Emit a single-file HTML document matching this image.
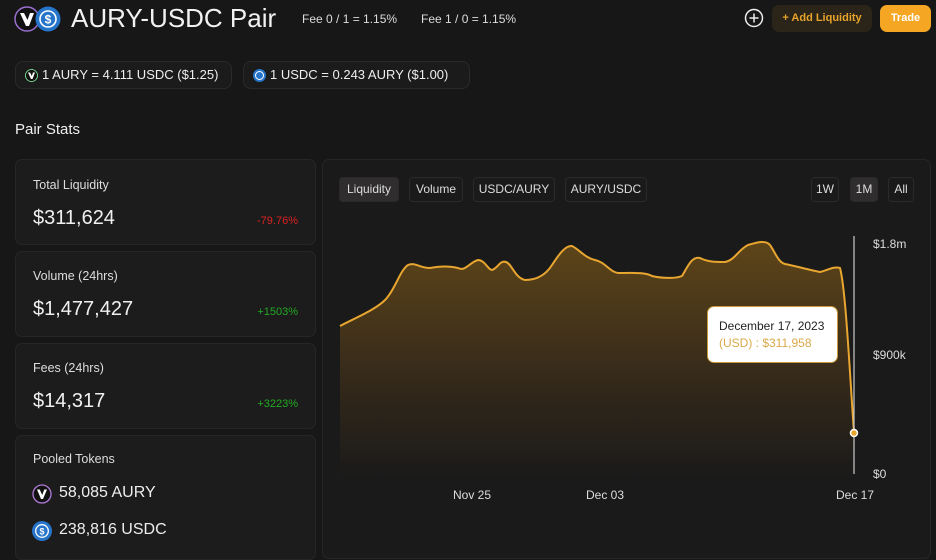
<!DOCTYPE html>
<html><head><meta charset="utf-8"><style>
*{margin:0;padding:0;box-sizing:border-box}
body{width:936px;height:548px;background:#171717;font-family:"Liberation Sans",sans-serif;color:#eee;position:relative;overflow:hidden}
.a{position:absolute}
.card{position:absolute;left:15px;width:301px;background:#1c1c1c;border:1px solid #262626;border-radius:7px}
.lbl{position:absolute;left:17px;font-size:12.5px;color:#ddd}
.val{position:absolute;left:17px;font-size:20px;color:#f0f0f0}
.pct{position:absolute;right:17px;font-size:11px}
.btn{position:absolute;top:177px;height:25px;border:1px solid #2a2a2a;border-radius:4px;background:#1a1a1a;font-size:12px;color:#ddd;line-height:23px;text-align:center}
.pill{position:absolute;top:61px;height:28px;border:1px solid #2a2a2a;border-radius:8px;background:#1b1b1b;font-size:13px;line-height:26px;color:#eee;padding-left:26px}
</style></head><body>
<svg class="a" style="left:14px;top:5px" width="50" height="28">
<circle cx="13" cy="14" r="12" fill="#111" stroke="#9a6fd0" stroke-width="1.5"/>
<path d="M6 8 L12 21 L15 21 L20 8 L16 8 L13.5 15 L10 8Z" fill="#fff"/>
<circle cx="34" cy="14" r="12.5" fill="#2775ca"/>
<circle cx="34" cy="14" r="8" fill="none" stroke="#fff" stroke-width="1.6"/>
<text x="34" y="18.5" font-size="12" font-weight="bold" fill="#fff" text-anchor="middle" font-family="Liberation Sans">$</text>
</svg>
<div class="a" style="left:71px;top:3px;font-size:26px;color:#f2f2f2">AURY-USDC Pair</div>
<div class="a" style="left:302px;top:12px;font-size:12px;color:#ddd">Fee 0 / 1 = 1.15%</div>
<div class="a" style="left:421px;top:12px;font-size:12px;color:#ddd">Fee 1 / 0 = 1.15%</div>
<svg class="a" style="left:744px;top:8px" width="20" height="20"><circle cx="10" cy="10" r="8.5" fill="none" stroke="#eee" stroke-width="1.5"/><path d="M10 5.5V14.5M5.5 10H14.5" stroke="#eee" stroke-width="1.5"/></svg>
<div class="a" style="left:772px;top:5px;width:100px;height:27px;border-radius:7px;background:#2a2419;color:#e8a42a;font-size:11px;font-weight:bold;line-height:27px;text-align:center">+ Add Liquidity</div>
<div class="a" style="left:880px;top:5px;width:51px;height:27px;border-radius:7px;background:#f5a623;color:#fff;font-size:11px;font-weight:bold;line-height:27px;text-align:center">Trade</div>
<div class="pill" style="left:15px;width:217px"><svg class="a" style="left:9px;top:7px" width="13" height="13"><circle cx="6.5" cy="6.5" r="6" fill="#111" stroke="#8fa" stroke-width=".8"/><path d="M3 3.5L6 10L7.5 10L10 3.5L8 3.5L6.8 7L5 3.5Z" fill="#fff"/></svg>1 AURY = 4.111 USDC ($1.25)</div>
<div class="pill" style="left:243px;width:227px"><svg class="a" style="left:9px;top:7px" width="13" height="13"><circle cx="6.5" cy="6.5" r="6.5" fill="#2775ca"/><circle cx="6.5" cy="6.5" r="4" fill="none" stroke="#fff" stroke-width="1"/></svg>1 USDC = 0.243 AURY ($1.00)</div>
<div class="a" style="left:15px;top:121px;font-size:15px;color:#eee">Pair Stats</div>
<div class="card" style="top:159px;height:86px"><div class="lbl" style="top:18px">Total Liquidity</div><div class="val" style="top:47px">$311,624</div><div class="pct" style="top:55px;color:#d22">-79.76%</div></div>
<div class="card" style="top:251px;height:86px"><div class="lbl" style="top:17px">Volume (24hrs)</div><div class="val" style="top:46px">$1,477,427</div><div class="pct" style="top:54px;color:#2a2">+1503%</div></div>
<div class="card" style="top:343px;height:86px"><div class="lbl" style="top:17px">Fees (24hrs)</div><div class="val" style="top:46px">$14,317</div><div class="pct" style="top:54px;color:#2a2">+3223%</div></div>
<div class="card" style="top:435px;height:125px"><div class="lbl" style="top:16px">Pooled Tokens</div>
<svg class="a" style="left:16px;top:48px" width="20" height="20"><circle cx="10" cy="10" r="9" fill="#111" stroke="#b07ad8" stroke-width="1.3"/><path d="M5 5.5L9 15L11 15L15 5.5L12.3 5.5L10.2 11L7.7 5.5Z" fill="#fff"/></svg>
<div class="a" style="left:43px;top:48px;font-size:16px">58,085 AURY</div>
<svg class="a" style="left:16px;top:85px" width="20" height="20"><circle cx="10" cy="10" r="10" fill="#2775ca"/><circle cx="10" cy="10" r="6.3" fill="none" stroke="#fff" stroke-width="1.3"/><text x="10" y="13.5" font-size="9" font-weight="bold" fill="#fff" text-anchor="middle" font-family="Liberation Sans">$</text></svg>
<div class="a" style="left:43px;top:85px;font-size:16px">238,816 USDC</div></div>
<div class="a" style="left:322px;top:159px;width:609px;height:400px;background:#1a1a1a;border:1px solid #262626;border-radius:7px"></div>
<div class="btn" style="left:339px;width:60px;background:#2f2d2d">Liquidity</div>
<div class="btn" style="left:409px;width:54px">Volume</div>
<div class="btn" style="left:473px;width:82px">USDC/AURY</div>
<div class="btn" style="left:565px;width:82px">AURY/USDC</div>
<div class="btn" style="left:811px;width:28px">1W</div>
<div class="btn" style="left:850px;width:28px;background:#2f2d2d">1M</div>
<div class="btn" style="left:888px;width:26px">All</div>
<svg class="a" style="left:0;top:0" width="936" height="548">
<defs><linearGradient id="g" x1="0" y1="0" x2="0" y2="1"><stop offset="0" stop-color="#5e4519"/><stop offset="0.6" stop-color="#33281a"/><stop offset="1" stop-color="#1a1a1a"/></linearGradient></defs>
<path d="M340 326 C355 318 375 310 385 300 C395 290 400 270 408 265 C415 262 420 268 430 268 C440 266 450 266 458 268 C465 272 470 262 478 260 C485 260 488 270 492 270 C498 268 500 260 506 262 C512 264 515 278 525 280 C535 280 545 276 552 265 C558 256 565 245 572 246 C580 250 585 258 595 260 C605 262 610 272 618 273 C630 273 645 272 652 276 C660 278 675 279 682 276 C688 266 692 256 700 258 C708 262 715 262 725 262 C735 260 738 250 748 245 C758 242 766 240 770 245 C775 252 778 262 785 264 C795 266 810 270 820 272 C828 270 834 266 840 268 C846 290 850 380 854 432 L854 480 L340 480Z" fill="url(#g)"/>
<path d="M340 326 C355 318 375 310 385 300 C395 290 400 270 408 265 C415 262 420 268 430 268 C440 266 450 266 458 268 C465 272 470 262 478 260 C485 260 488 270 492 270 C498 268 500 260 506 262 C512 264 515 278 525 280 C535 280 545 276 552 265 C558 256 565 245 572 246 C580 250 585 258 595 260 C605 262 610 272 618 273 C630 273 645 272 652 276 C660 278 675 279 682 276 C688 266 692 256 700 258 C708 262 715 262 725 262 C735 260 738 250 748 245 C758 242 766 240 770 245 C775 252 778 262 785 264 C795 266 810 270 820 272 C828 270 834 266 840 268 C846 290 850 380 854 432" fill="none" stroke="#e8a630" stroke-width="2"/>
<line x1="854" y1="236" x2="854" y2="474" stroke="#ccc" stroke-width="1.2"/>
<circle cx="854" cy="433" r="3.5" fill="#e8a630" stroke="#fff" stroke-width="1.5"/>
<g font-family="Liberation Sans" font-size="12" fill="#ddd"><text x="873" y="248">$1.8m</text><text x="873" y="359">$900k</text><text x="873" y="478">$0</text>
<text x="453" y="499">Nov 25</text><text x="586" y="499">Dec 03</text><text x="836" y="499">Dec 17</text></g>
</svg>
<div class="a" style="left:707px;top:306px;width:131px;height:57px;background:#fff;border:1.5px solid #c89a3a;border-radius:7px"><div class="a" style="left:11px;top:12px;font-size:12px;color:#222">December 17, 2023</div><div class="a" style="left:11px;top:29px;font-size:12px;color:#d9a84a">(USD) : $311,958</div></div>
</body></html>
